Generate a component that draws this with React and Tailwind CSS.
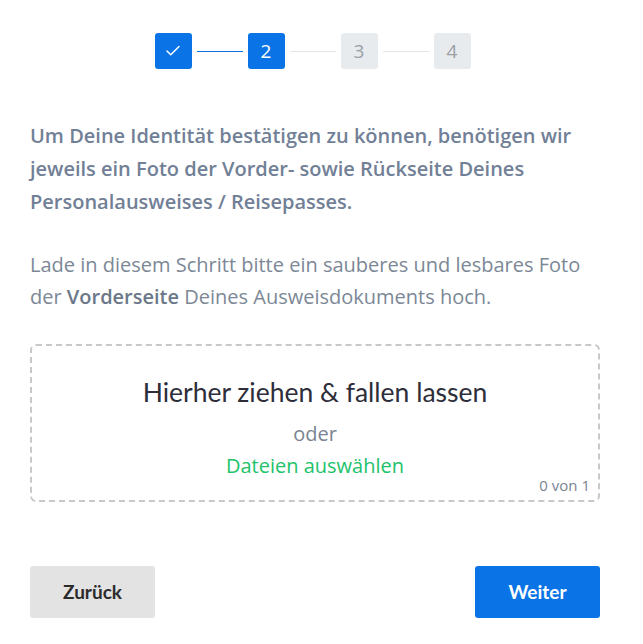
import { Check } from 'lucide-react';

const steps = [
  { label: 'done', state: 'done' },
  { label: '2', state: 'active' },
  { label: '3', state: 'todo' },
  { label: '4', state: 'todo' },
];

function Stepper() {
  return (
    <div className="flex items-center justify-center pr-[5px] pt-[33px]">
      {steps.map((step, i) => (
        <div key={i} className="flex items-center">
          {i > 0 && (
            <div
              className={`mx-[5px] h-px w-[46px] ${
                step.state === 'todo' ? 'bg-[#e3e6ea]' : 'bg-[#0a6fd8]'
              }`}
            />
          )}
          <div
            className={`flex h-9 w-[37px] items-center justify-center rounded-[3px] text-[19px] ${
              step.state === 'todo'
                ? 'bg-[#e8ebee] text-[#9aa0a6]'
                : 'bg-[#0a74e6] text-white'
            }`}
          >
            {step.state === 'done' ? <Check size={18} strokeWidth={2} /> : step.label}
          </div>
        </div>
      ))}
    </div>
  );
}

export default function App() {
  return (
    <div className="min-h-screen bg-white pl-[30px] pr-[43px] font-['Open_Sans',sans-serif]">
      <Stepper />

      <p className="mt-[50px] text-[20px] font-semibold leading-[33px] text-[#718096]">
        Um Deine Identität bestätigen zu können, benötigen wir jeweils ein Foto der Vorder- sowie
        Rückseite Deines Personalausweises / Reisepasses.
      </p>

      <p className="mt-[31px] text-[20px] leading-[32px] text-[#7c8896]">
        Lade in diesem Schritt bitte ein sauberes und lesbares Foto der{' '}
        <span className="font-semibold text-[#6b7889]">Vorderseite</span> Deines
        Ausweisdokuments hoch.
      </p>

      <div className="relative mt-[31px] flex h-[158px] flex-col items-center rounded-[6px] border-2 border-dashed border-[#c8c8c8] pt-[28px]">
        <div className="font-['Lato',sans-serif] text-[26.5px] leading-[36px] text-[#2e2e3b]">
          Hierher ziehen &amp; fallen lassen
        </div>
        <div className="mt-[10px] text-[20px] leading-[28px] text-[#7a8391]">oder</div>
        <button className="mt-[4px] text-[20px] leading-[28px] text-[#21c26a]">
          Dateien auswählen
        </button>
        <span className="absolute bottom-[4px] right-[8px] text-[15px] text-[#7a8391]">
          0 von 1
        </span>
      </div>

      <div className="mt-[64px] flex justify-between">
        <button className="h-[52px] w-[125px] rounded-[3px] bg-[#e3e3e3] font-['Lato',sans-serif] text-[19px] font-bold text-[#2b2b2b]">
          Zurück
        </button>
        <button className="h-[52px] w-[125px] rounded-[3px] bg-[#0a74e6] font-['Lato',sans-serif] text-[19px] font-bold text-white">
          Weiter
        </button>
      </div>
    </div>
  );
}
